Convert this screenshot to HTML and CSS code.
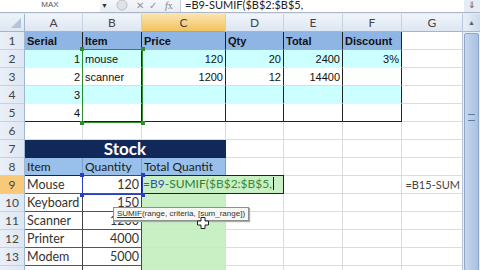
FILE: index.html
```html
<!DOCTYPE html>
<html lang="en">
<head>
    <meta charset="utf-8">
    <link rel="stylesheet" href="styles.css">
</head>
<body>
<div class="app">
    <div class="fbar">
        <div class="namebox">MAX</div>
        <div class="fbtns">
            <span class="drop">&#9660;</span>
            <svg class="ico" width="12" height="12" viewBox="0 0 12 12"><circle cx="6" cy="6" r="5" fill="#dfe3e8" stroke="#b8bec6"/></svg>
            <span class="xx">&#10005;</span>
            <span class="ok">&#10003;</span>
            <span class="fx"><i>f</i>x</span>
        </div>
        <div class="ftext">=B9-SUMIF($B$2:$B$5,</div>
        <div class="fexp">&#8659;</div>
    </div>
    <div class="main">
        <div class="sheet">
            <!-- column headers -->
            <div class="corner"></div>
            <div class="ch">A</div>
            <div class="ch">B</div>
            <div class="ch sel">C</div>
            <div class="ch">D</div>
            <div class="ch">E</div>
            <div class="ch">F</div>
            <div class="ch">G</div>

            <div class="rh">1</div>
            <div class="c tb hd">Serial</div>
            <div class="c tb hd">Item</div>
            <div class="c tb hd">Price</div>
            <div class="c tb hd">Qty</div>
            <div class="c tb hd">Total</div>
            <div class="c tb hd">Discount</div>
            <div class="c"></div>

            <div class="rh">2</div>
            <div class="c tb cy r">1</div>
            <div class="c tb cy">mouse</div>
            <div class="c tb cy r">120</div>
            <div class="c tb cy r">20</div>
            <div class="c tb cy r">2400</div>
            <div class="c tb cy r">3%</div>
            <div class="c"></div>

            <div class="rh">3</div>
            <div class="c tb r">2</div>
            <div class="c tb">scanner</div>
            <div class="c tb r">1200</div>
            <div class="c tb r">12</div>
            <div class="c tb r">14400</div>
            <div class="c tb"></div>
            <div class="c"></div>

            <div class="rh">4</div>
            <div class="c tb cy r">3</div>
            <div class="c tb cy"></div>
            <div class="c tb cy"></div>
            <div class="c tb cy"></div>
            <div class="c tb cy"></div>
            <div class="c tb cy"></div>
            <div class="c"></div>

            <div class="rh">5</div>
            <div class="c tb bt r">4</div>
            <div class="c tb bt"></div>
            <div class="c tb bt"></div>
            <div class="c tb bt"></div>
            <div class="c tb bt"></div>
            <div class="c tb bt"></div>
            <div class="c"></div>

            <div class="rh">6</div>
            <div class="c"></div><div class="c"></div><div class="c"></div><div class="c"></div><div class="c"></div><div class="c"></div><div class="c"></div>

            <div class="rh">7</div>
            <div class="c stock">Stock</div>
            <div class="c"></div><div class="c"></div><div class="c"></div><div class="c"></div>

            <div class="rh">8</div>
            <div class="c st sh">Item</div>
            <div class="c st sh">Quantity</div>
            <div class="c st sh">Total Quantit</div>
            <div class="c"></div><div class="c"></div><div class="c"></div><div class="c"></div>

            <div class="rh sel">9</div>
            <div class="c st">Mouse</div>
            <div class="c st r">120</div>
            <div class="c edit">=<span class="rb">B9</span>-SUMIF(<span class="rg">$B$2:$B$5</span>,<span class="caret"></span></div>
            <div class="c"></div>
            <div class="c"></div>
            <div class="c gtext">=B15-SUM</div>

            <div class="rh">10</div>
            <div class="c st">Keyboard</div>
            <div class="c st r">150</div>
            <div class="c gr"></div>
            <div class="c"></div><div class="c"></div><div class="c"></div><div class="c"></div>

            <div class="rh">11</div>
            <div class="c st">Scanner</div>
            <div class="c st r">1200</div>
            <div class="c gr"></div>
            <div class="c"></div><div class="c"></div><div class="c"></div><div class="c"></div>

            <div class="rh">12</div>
            <div class="c st">Printer</div>
            <div class="c st r">4000</div>
            <div class="c gr"></div>
            <div class="c"></div><div class="c"></div><div class="c"></div><div class="c"></div>

            <div class="rh">13</div>
            <div class="c st">Modem</div>
            <div class="c st r">5000</div>
            <div class="c gr"></div>
            <div class="c"></div><div class="c"></div><div class="c"></div><div class="c"></div>

            <div class="rh">14</div>
            <div class="c st"></div>
            <div class="c st"></div>
            <div class="c gr"></div>
            <div class="c"></div><div class="c"></div><div class="c"></div><div class="c"></div>

            <!-- range highlights, tooltip, cursor -->
            <div class="rng rng-green"><i class="k tl"></i><i class="k tr"></i><i class="k bl"></i><i class="k br"></i></div>
            <div class="rng rng-blue"><i class="k tl"></i><i class="k tr"></i><i class="k bl"></i><i class="k br"></i></div>
            <div class="tip"><u>SUMIF</u>(range, criteria, [sum_range])</div>
            <svg class="cursor" width="12" height="12" viewBox="0 0 12 12"><path d="M4 0.5h4v3.5h3.5v4h-3.5v3.5h-4v-3.5h-3.5v-4h3.5z" fill="#fff" stroke="#222"/></svg>
        </div>
        <div class="vscroll">
            <div class="sbtn">&#9650;</div>
            <div class="thumb"><span class="grip"></span></div>
        </div>
    </div>
</div>
</body>
</html>
```

FILE: styles.css
```css
body{
    margin: 0;
    padding: 0;
    background: #fff;
    overflow: hidden;
}
.app{
    width: 480px;
    height: 270px;
    overflow: hidden;
    font-family: 'Liberation Sans', Arial, sans-serif;
    font-size: 11px;
    color: #111;
}
/* formula bar */
.fbar{
    display: flex;
    height: 12px;
    border-bottom: 1px solid #a9b7c9;
    margin-bottom: 1px;
    background: #fff;
    overflow: hidden;
    box-shadow: 0 1px 0 #e3e9f1;
}
.namebox{
    width: 100px;
    text-align: center;
    font-size: 8px;
    line-height: 9px;
    color: #555;
    padding-left: 0;
}
.fbtns{
    width: 80px;
    display: flex;
    align-items: center;
    gap: 8px;
    margin-top: -2px;
    color: #8a939e;
    background: linear-gradient(#f6f8fb, #e9edf3);
    border-right: 1px solid #c4ccd6;
}
.drop{
    font-size: 7px;
    color: #333;
    margin-left: 1px;
}
.xx, .ok{
    font-size: 10px;
    color: #8d96a0;
}
.ok{ margin-left: -3px; }
.fx{
    font-family: 'Liberation Serif', serif;
    font-size: 10px;
    color: #7b8490;
}
.ftext{
    flex: 1;
    padding-left: 4px;
    font-family: Lato, sans-serif;
    font-size: 11px;
    line-height: 9px;
    color: #222;
}
.fexp{
    width: 16px;
    font-size: 9px;
    line-height: 10px;
    text-align: center;
    color: #4a5a70;
    background: #e6ecf4;
}
/* sheet */
.main{
    display: flex;
    height: 257px;
}
.sheet{
    position: relative;
    display: grid;
    grid-template-columns: 25px 58px 59px 84px 58px 59px 59px 61px;
    grid-auto-rows: 18px;
    width: 463px;
    overflow: hidden;
}
.corner{
    background: linear-gradient(#eef3fa, #dde6f2);
    border-right: 1px solid #9eb6ce;
    border-bottom: 1px solid #9eb6ce;
    position: relative;
}
.corner:after{
    content: "";
    position: absolute;
    right: 3px;
    bottom: 3px;
    border-left: 10px solid transparent;
    border-bottom: 10px solid #b4c3d6;
}
.ch{
    background: linear-gradient(#f1f5fb, #dde6f2);
    border-right: 1px solid #c5d1e0;
    border-bottom: 1px solid #9eb6ce;
    text-align: center;
    font-family: Lato, sans-serif;
    font-size: 12px;
    line-height: 17px;
    color: #444;
}
.ch.sel{
    background: linear-gradient(#fbe3b0, #f2c35d);
    border-bottom-color: #d3a040;
}
.rh{
    background: linear-gradient(90deg, #eaf0f8, #dde6f2);
    border-right: 1px solid #9eb6ce;
    border-bottom: 1px solid #c5d1e0;
    text-align: center;
    font-family: Lato, sans-serif;
    font-size: 12px;
    line-height: 17px;
    color: #444;
}
.rh.sel{
    background: #f8c978;
}
.c{
    border-right: 1px solid #dadcdd;
    border-bottom: 1px solid #dadcdd;
    padding: 0 2px;
    line-height: 18px;
    white-space: nowrap;
    overflow: hidden;
}
.r{ text-align: right; }
.tb{ border-right-color: #222; }
.bt{ border-bottom-color: #222; }
.hd{
    background: #8fb5e4;
    font-weight: bold;
    border-bottom-color: #8fb5e4;
}
.cy{
    background: #ccffff;
    border-bottom-color: #ccffff;
}
.stock{
    grid-column: span 3;
    background: #10295a;
    color: #fff;
    text-align: center;
    font-family: Lato, sans-serif;
    font-weight: bold;
    font-size: 17px;
    line-height: 17px;
    border-right-color: #10295a;
    border-bottom-color: #10295a;
}
.st{
    font-family: Lato, sans-serif;
    font-size: 12.5px;
    color: #333;
    border-right-color: #444;
    border-bottom-color: #555;
}
.sh{
    background: #98c0ea;
    border-right-color: #7a9cc6;
    border-bottom-color: #222;
    color: #1a1a1a;
}
.sh:nth-child(n){ font-size: 12px; }
.edit{
    grid-column: span 2;
    background: #c8f0c4;
    border: 1px solid #222;
    font-family: Lato, sans-serif;
    font-size: 12px;
    line-height: 16px;
    color: #2e7d32;
    padding-left: 1px;
    margin-left: -1px;
    margin-top: -1px;
}
.rb{ color: #2f4fa8; }
.rg{ color: #3a8a3a; }
.caret{
    display: inline-block;
    width: 1px;
    height: 13px;
    background: #111;
    vertical-align: -2px;
    margin-left: 1px;
}
.gtext{
    font-family: Lato, sans-serif;
    font-size: 11px;
    color: #444;
    text-align: right;
    padding: 0 2px 0 0;
}
.gr{
    background: #c8f0c4;
}
/* overlays */
.rng{
    position: absolute;
    border: 1px solid;
}
.rng-green{
    left: 82px;
    top: 35px;
    width: 59px;
    height: 72px;
    border-color: #2e8b2e;
}
.rng-blue{
    left: 82px;
    top: 161px;
    width: 59px;
    height: 18px;
    border-color: #2a3fbf;
}
.k{
    position: absolute;
    width: 4px;
    height: 4px;
}
.rng-green .k{ background: #2e8b2e; }
.rng-blue .k{ background: #2a3fbf; }
.tl{ left: -3px; top: -3px; }
.tr{ right: -3px; top: -3px; }
.bl{ left: -3px; bottom: -3px; }
.br{ right: -3px; bottom: -3px; }
.tip{
    position: absolute;
    left: 113px;
    top: 193px;
    padding: 0 3px;
    height: 12px;
    line-height: 12px;
    font-size: 8px;
    color: #333;
    background: #f7f7f4;
    border: 1px solid #8f8f8f;
    box-shadow: 1px 1px 1px #aaa;
    white-space: nowrap;
}
.cursor{
    position: absolute;
    left: 197px;
    top: 203px;
}
/* scrollbar */
.vscroll{
    width: 17px;
    border-left: 1px solid #b8c6d8;
    background: #e9eff7;
    display: flex;
    flex-direction: column;
}
.sbtn{
    height: 17px;
    font-size: 7px;
    line-height: 17px;
    text-align: center;
    color: #4b6282;
    background: linear-gradient(90deg, #e8eff8, #cfdbea);
    border-bottom: 1px solid #a7b9d0;
}
.thumb{
    flex: 1;
    margin: 1px 1px 0 1px;
    background: linear-gradient(90deg, #c7d7ee, #a9c1e2);
    border: 1px solid #8ea7c9;
    border-radius: 2px;
    position: relative;
}
.grip{
    position: absolute;
    left: 3px;
    top: 80px;
    width: 7px;
    height: 5px;
    border-top: 1px solid #5f7ca3;
    border-bottom: 1px solid #5f7ca3;
}
```
